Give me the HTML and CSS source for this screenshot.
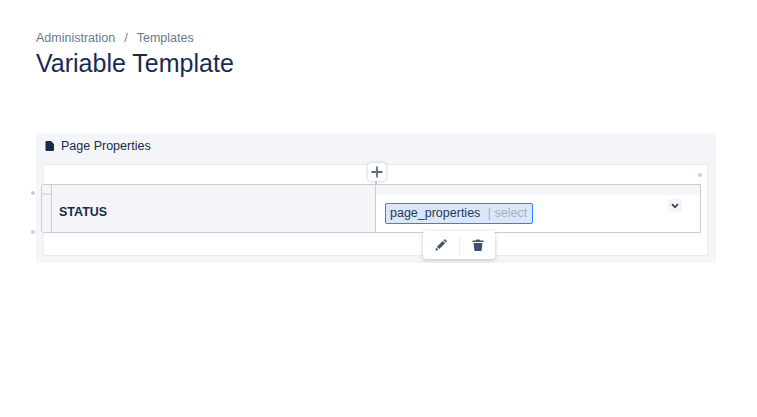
FILE: index.html
```html
<!DOCTYPE html>
<html lang="en">
<head>
  <meta charset="utf-8" />
  <title>Variable Template</title>
  <link rel="stylesheet" href="styles.css">
</head>
<body>
  <nav class="breadcrumbs">
    <a>Administration</a>
    <span class="sep">/</span>
    <a>Templates</a>
  </nav>
  <h1>Variable Template</h1>

  <div class="macro">
    <div class="macro-title">
      <svg class="page-icon" width="10" height="12" viewBox="0 0 10 12"><path d="M1.500 1h4.500l3 3v6a1 1 0 0 1-1 1h-6.500a1 1 0 0 1-1-1v-8a1 1 0 0 1 1-1z" fill="#172b4d"/></svg>
      <span>Page Properties</span>
    </div>
    <div class="editor">
      <button class="add-btn">
        <svg width="12" height="12" viewBox="0 0 12 12"><path d="M6 0.500v11M0.500 6h11" stroke="#5e6c84" stroke-width="1.800"/></svg>
      </button>
      <span class="dot dot-right"></span>
      <span class="dot dot-left-1"></span>
      <span class="dot dot-left-2"></span>

      <div class="table">
        <div class="row head-row">
          <div class="cell num"></div>
          <div class="cell label"></div>
          <div class="cell value"></div>
        </div>
        <div class="row body-row">
          <div class="cell num"></div>
          <div class="cell label">STATUS</div>
          <div class="cell value">
            <span class="var-chip">page_properties <span class="hint">| select</span></span>
            <span class="cell-menu">
              <svg width="8" height="6" viewBox="0 0 8 6"><path d="M1 1.200l3 3 3-3" fill="none" stroke="#344563" stroke-width="1.800"/></svg>
            </span>
          </div>
        </div>
      </div>

      <div class="toolbar">
        <svg width="12" height="12" viewBox="0 0 12 12"><path d="M0.500 11.500l0.600-3 2.400 2.400zM1.900 7.700l5.800-5.800 2.400 2.400-5.800 5.800zM8.400 1.200l0.700-0.700a0.800 0.800 0 0 1 1.100 0l1.300 1.300a0.800 0.800 0 0 1 0 1.100l-0.700 0.700z" fill="#42526e"/></svg>
        <span class="divider"></span>
        <svg width="12" height="12" viewBox="0 0 12 12"><path d="M0.500 1.500h3.500l0.500-1h3l0.500 1h3.500v1.500h-11zM1.500 4h9l-0.800 7a1 1 0 0 1-1 1h-5.400a1 1 0 0 1-1-1z" fill="#42526e"/></svg>
      </div>
    </div>
  </div>
</body>
</html>
```

FILE: styles.css
```css
body {
  margin: 0;
  padding: 30px 41px 0 36px;
  font-family: "Liberation Sans", Arial, sans-serif;
  color: #172b4d;
  background-color: white;
}
.breadcrumbs {
  font-size: 12.5px;
  line-height: 16px;
  color: #6b7890;
  display: flex;
  gap: 9px;
}
h1 {
  margin: 3px 0 0;
  font-size: 25px;
  font-weight: 400;
  line-height: 28px;
  color: #172b54;
}
.macro {
  margin-top: 56px;
  padding: 0 8px 7px 7px;
  background-color: #f4f5f8;
  border-radius: 3px;
}
.macro-title {
  height: 25px;
  margin-bottom: 6px;
  display: flex;
  align-items: center;
  gap: 6px;
  padding-left: 2px;
  font-size: 12.5px;
}
.page-icon {
  flex: none;
}
.editor {
  position: relative;
  padding: 20px 0 23px;
  background-color: white;
  border-radius: 2px;
  box-shadow: inset 0 0 0 1px #ebecf0;
}
.table {
  margin: 0 7px 0 -2px;
  border: 1px solid #c8cdd6;
  border-radius: 3px 0 0 3px;
}
.row {
  display: grid;
  grid-template-columns: 9px 324px 1fr;
}
.head-row {
  height: 9px;
  border-bottom: 1px solid #c8cdd6;
}
.body-row {
  height: 37px;
}
.cell {
  border-left: 1px solid #c8cdd6;
}
.cell.num {
  border-left: none;
  background-color: #f4f5f8;
}
.head-row .cell {
  background-color: #f4f5f8;
}
.head-row .num {
  box-sizing: border-box;
  border-bottom: 2px solid #dfe1e6;
}
.label {
  background-color: #f4f5f8;
  font-size: 12.5px;
  font-weight: 700;
  padding: 10px 0 0 7px;
  line-height: 15px;
}
.value {
  position: relative;
  padding: 8px 0 0 9px;
}
.var-chip {
  display: inline-block;
  height: 19px;
  line-height: 19px;
  padding: 0 5px 0 4px;
  font-size: 12.5px;
  color: #253858;
  background-color: #dbe7f9;
  border: 1px solid #2684ff;
  border-radius: 2px;
  white-space: pre;
}
.hint {
  color: #a9b0bd;
  margin-left: 4px;
}
.cell-menu {
  position: absolute;
  top: 4px;
  right: 18px;
  width: 14px;
  height: 13px;
  display: flex;
  align-items: center;
  justify-content: center;
  background-color: #f4f5f8;
  border-radius: 2px;
}
.add-btn {
  position: absolute;
  top: -1px;
  left: 325px;
  width: 18px;
  height: 18px;
  padding: 0;
  border: none;
  display: flex;
  align-items: center;
  justify-content: center;
  background-color: white;
  border-radius: 3px;
  box-shadow: 0 0 3px rgba(9, 30, 66, 0.3);
}
.add-btn::after {
  content: "";
  position: absolute;
  top: 18px;
  left: 7px;
  width: 2px;
  height: 11px;
  background-color: #c8cdd6;
}
.dot {
  position: absolute;
  width: 4px;
  height: 4px;
  border-radius: 50%;
  background-color: #c8cdd6;
}
.dot-right {
  top: 9px;
  right: 6px;
}
.dot-left-1 {
  top: 27px;
  left: -12px;
}
.dot-left-2 {
  top: 66px;
  left: -12px;
}
.toolbar {
  position: absolute;
  top: 67px;
  left: 380px;
  width: 72px;
  height: 28px;
  display: flex;
  align-items: center;
  justify-content: center;
  gap: 12px;
  background-color: white;
  border-radius: 3px;
  box-shadow: 0 1px 4px rgba(9, 30, 66, 0.25);
}
.divider {
  width: 1px;
  height: 18px;
  background-color: #ebecf0;
}
```
